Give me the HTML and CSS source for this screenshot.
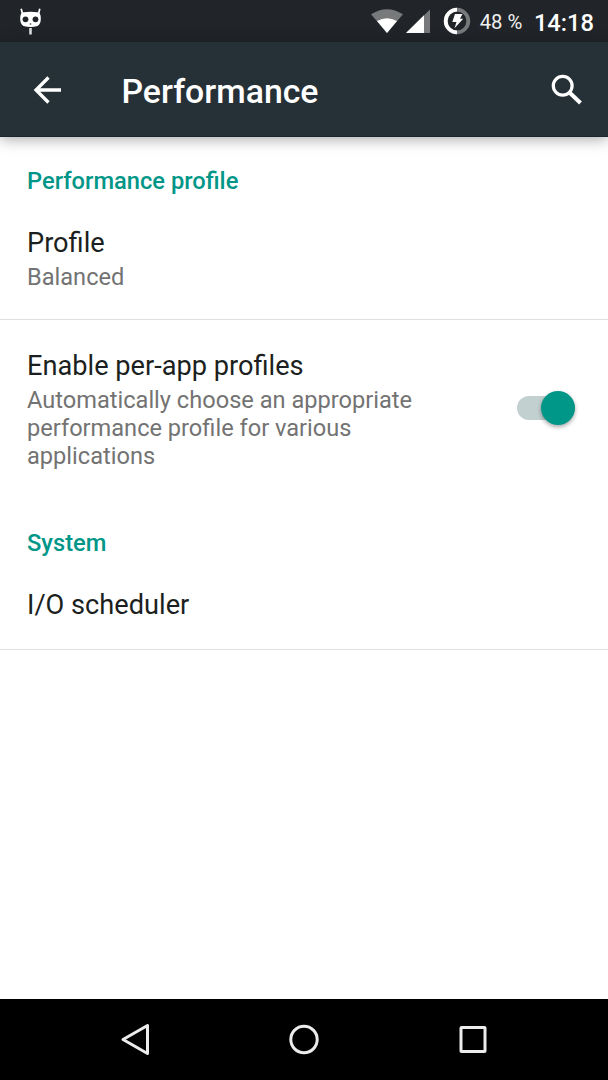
FILE: index.html
```html
<!DOCTYPE html>
<html lang="en">
<head>
    <meta charset="UTF-8">
    <title>Performance</title>
    <link rel="stylesheet" href="styles.css">
</head>
<body>
    <div class="screen">
        <div class="status-bar">
            <svg class="cid" width="24" height="30" viewBox="0 0 24 30">
                <path d="M4.500 6L3.200 0.800M20.500 6l1.300-5.200" stroke="#fff" stroke-width="1.700"/>
                <path d="M5.500 4.300Q12.500 3 19.500 4.300Q22.800 5 22.800 10Q23 16 19.500 18Q12.500 20 5.500 18Q2 16 2.200 10Q2.200 5 5.500 4.300Z" fill="#fff"/>
                <circle cx="7.500" cy="11.300" r="2.900" fill="#212529"/>
                <circle cx="17.500" cy="11.300" r="2.900" fill="#212529"/>
                <circle cx="12.500" cy="16" r="0.900" fill="#777"/>
                <path d="M12.500 20v6.500" stroke="#ddd" stroke-width="2.600"/>
            </svg>
            <div class="status-right">
                <svg class="wifi" width="32" height="26" viewBox="0 0 32 26">
                    <path d="M0 6.300Q16-4 32 6.300L16 25Z" fill="#77797b"/>
                    <path d="M6 13Q16 7.500 26 13L16 25Z" fill="#fff"/>
                </svg>
                <svg class="signal" width="25" height="25" viewBox="0 0 25 25">
                    <path d="M24 0.500V24H0Z" fill="#77797b"/>
                    <path d="M18 6.300V24H0Z" fill="#fff"/>
                </svg>
                <svg class="battery" width="28" height="28" viewBox="0 0 28 28">
                    <circle cx="14" cy="14" r="11.300" fill="none" stroke="#77797b" stroke-width="3.800"/>
                    <path d="M14 25.300A11.300 11.300 0 0 1 14 2.700" fill="none" stroke="#fff" stroke-width="3.800"/>
                    <path d="M12 7h7.500l-2.500 4.700h3.200L11.500 21.300l2-6.300H9.300Z" fill="#fff"/>
                </svg>
                <span class="percent">48 %</span>
                <span class="clock">14:18</span>
            </div>
        </div>

        <div class="toolbar">
            <svg class="back" width="30" height="30" viewBox="0 0 30 30">
                <path d="M28 15H3M15.500 2.500L3 15l12.500 12.500" fill="none" stroke="#fff" stroke-width="3.300"/>
            </svg>
            <h1>Performance</h1>
            <svg class="search" width="32" height="32" viewBox="0 0 32 32">
                <circle cx="11.700" cy="11.700" r="9.400" fill="none" stroke="#fff" stroke-width="3.200"/>
                <path d="M19 19l10.500 10" stroke="#fff" stroke-width="4"/>
            </svg>
        </div>

        <div class="list">
            <div class="category">Performance profile</div>
            <div class="item divider">
                <div class="text">
                    <div class="title">Profile</div>
                    <div class="summary">Balanced</div>
                </div>
            </div>
            <div class="item">
                <div class="text">
                    <div class="title">Enable per-app profiles</div>
                    <div class="summary">Automatically choose an appropriate performance profile for various applications</div>
                </div>
                <div class="switch"><div class="thumb"></div></div>
            </div>
            <div class="category">System</div>
            <div class="item divider">
                <div class="text">
                    <div class="title">I/O scheduler</div>
                </div>
            </div>
        </div>

        <div class="nav-bar">
            <svg width="34" height="34" viewBox="0 0 34 34">
                <path d="M29.500 2.500v28L5 16.500Z"/>
            </svg>
            <svg width="34" height="34" viewBox="0 0 34 34">
                <circle cx="17" cy="16.500" r="13.200"/>
            </svg>
            <svg width="34" height="34" viewBox="0 0 34 34">
                <rect x="5" y="4.500" width="24" height="24" rx="0.500"/>
            </svg>
        </div>
    </div>
</body>
</html>
```
FILE: styles.css
```css
body {
    margin: 0;
    background: #fff;
    font-family: Roboto, sans-serif;
}
svg {
    display: block;
    flex-shrink: 0;
}
.screen {
    display: flex;
    flex-direction: column;
    height: 1080px;
    overflow: hidden;
}
.status-bar {
    display: flex;
    justify-content: space-between;
    height: 42px;
    padding: 0 14px 0 18px;
    background: #212529;
    color: #fff;
}
.cid {
    margin-top: 8px;
}
.status-right {
    display: flex;
    align-items: flex-start;
}
.wifi {
    margin-top: 8px;
}
.signal {
    margin: 9px 0 0 3px;
}
.battery {
    margin: 7px 0 0 12px;
}
.percent {
    margin-left: 8.500px;
    font-size: 20.3px;
    line-height: 44px;
    color: #f0f0f0;
}
.clock {
    margin-left: 11.500px;
    font-size: 23.7px;
    font-weight: 500;
    line-height: 46px;
}
.toolbar {
    display: flex;
    align-items: center;
    box-sizing: border-box;
    height: 95px;
    padding: 1px 25px 0 32.500px;
    background: #263137;
    border-bottom: 1px solid #1c2529;
    box-shadow: 0 2px 14px rgba(0,0,0,0.35);
    color: #fff;
    z-index: 1;
}
.toolbar h1 {
    flex: 1;
    margin: 4px 0 0 59px;
    font-size: 33.8px;
    font-weight: 500;
    line-height: 40px;
}
.list {
    flex: 1;
}
.category {
    padding: 30px 27px 2px;
    font-size: 23.7px;
    font-weight: 500;
    line-height: 28px;
    color: #009688;
}
.item + .category {
    padding-top: 31px;
}
.item {
    display: flex;
    align-items: center;
    justify-content: space-between;
    padding: 29px 27px 27px;
}
.divider {
    border-bottom: 1px solid #e0e0e0;
}
.text {
    max-width: 420px;
}
.title {
    font-size: 27.2px;
    line-height: 34px;
    color: #1c1f20;
}
.summary {
    margin: 3px 0 1px;
    font-size: 23.6px;
    line-height: 28px;
    color: #737373;
}
.switch {
    display: flex;
    align-items: center;
    justify-content: flex-end;
    width: 58px;
    height: 24px;
    margin: 0 6px 4px 0;
    border-radius: 12px;
    background: #c2d0cf;
}
.thumb {
    flex-shrink: 0;
    width: 34px;
    height: 34px;
    border-radius: 50%;
    background: #009688;
    box-shadow: 0 2px 4px rgba(0,0,0,0.35);
}
.nav-bar {
    display: flex;
    align-items: center;
    justify-content: center;
    gap: 135px;
    height: 81px;
    background: #000;
}
.nav-bar svg {
    fill: none;
    stroke: #ececec;
    stroke-width: 3;
    stroke-linejoin: round;
}
```
